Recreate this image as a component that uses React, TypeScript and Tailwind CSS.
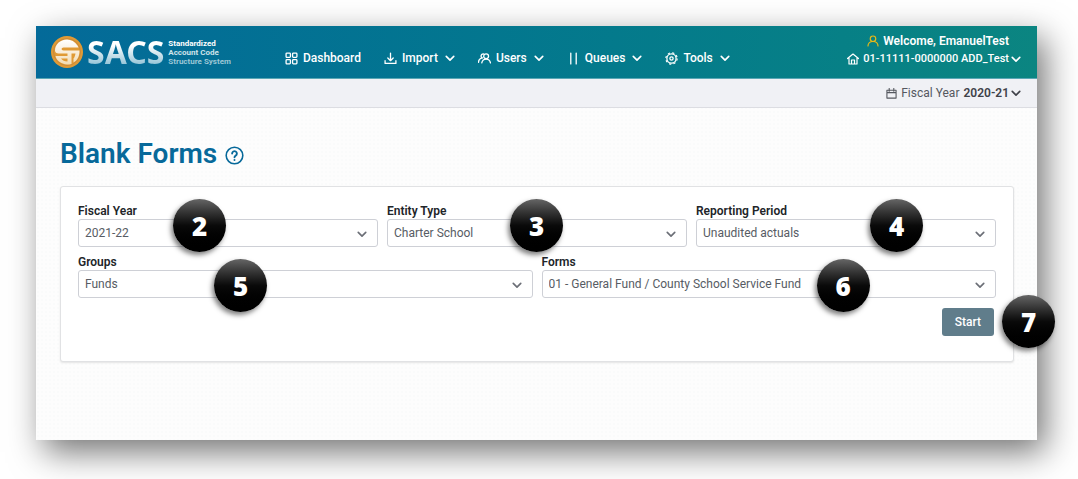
import { useId, type ReactNode } from "react";

type IconProps = { className?: string; children: ReactNode };

function Icon({ className = "size-[13px]", children }: IconProps) {
  return (
    <svg
      viewBox="0 0 24 24"
      fill="none"
      stroke="currentColor"
      strokeWidth="2.400"
      strokeLinecap="round"
      strokeLinejoin="round"
      aria-hidden="true"
      className={`shrink-0 ${className}`}
    >
      {children}
    </svg>
  );
}

function Chevron({ className = "size-2.5" }: { className?: string }) {
  return (
    <Icon className={className}>
      <path d="M3 8l9 9 9-9" strokeWidth="4" />
    </Icon>
  );
}

function Logo() {
  return (
    <a href="#home" className="flex items-center gap-1 text-white">
      <svg viewBox="0 0 64 64" className="size-8 shrink-0" aria-hidden="true">
        <defs>
          <linearGradient id="mark" gradientUnits="userSpaceOnUse" x1="0" y1="8" x2="0" y2="56">
            <stop offset="0" stopColor="#ffffff" />
            <stop offset="1" stopColor="#f3dcb4" />
          </linearGradient>
        </defs>
        <circle cx="32" cy="32" r="32" fill="#e09a35" />
        <circle cx="32" cy="32" r="27" fill="none" stroke="#c98a3a" strokeWidth="2" />
        <path
          d="M53 19C48 11 40 7 32 7 18 7 8 17 8 29c0 4 3 6 7 6h18v5H9c2 9 11 16 23 17 3 0 6 0 9-1V35h8c-1 5-2 8-4 10v8c8-5 12-12 12-24H25c-5 0-5-6 0-6h30ZM20 45h13v6c-6 0-10-2-13-6Z"
          fill="url(#mark)"
          fillRule="evenodd"
        />
      </svg>
      <span className="bg-linear-to-b from-white from-30% to-[#7fb9cf] bg-clip-text font-['Noto_Sans',sans-serif] text-[32px] leading-8 font-bold text-transparent">
        SACS
      </span>
      <span className="text-[8px] leading-[9px] font-bold">
        <span className="block">Standardized</span>
        <span className="block text-[#cfe3ea]">Account Code</span>
        <span className="block text-[#9cc7d6]">Structure System</span>
      </span>
    </a>
  );
}

function NavItem({ icon, label, menu = true }: { icon: ReactNode; label: string; menu?: boolean }) {
  return (
    <button type="button" className="flex items-center gap-[5px]">
      {icon}
      <span>{label}</span>
      {menu && <Chevron className="ml-0.5 size-2.5" />}
    </button>
  );
}

function Badge({ n, className }: { n: number; className: string }) {
  return (
    <span
      className={`pointer-events-none absolute z-10 flex h-[53px] w-[53px] items-center justify-center rounded-full bg-linear-to-b from-[#666] via-[#0a0a0a] via-50% to-black font-['Open_Sans',sans-serif] text-[26px] leading-none font-extrabold text-white shadow-[-2px_3px_5px_rgba(0,0,0,0.5)] ${className}`}
    >
      {n}
    </span>
  );
}

function Field({ label, value, badge, badgeClass }: { label: string; value: string; badge: number; badgeClass: string }) {
  const id = useId();
  return (
    <div className="relative min-w-0 flex-1">
      <label htmlFor={id} className="block text-xs leading-4 font-semibold text-[#212529]">
        {label}
      </label>
      <div className="relative">
        <select
          id={id}
          defaultValue={value}
          className="h-7 w-full appearance-none rounded-[3px] border border-[#ced0d6] bg-white pr-8 pl-1.5 text-xs text-[#575c64]"
        >
          <option>{value}</option>
        </select>
        <Chevron className="pointer-events-none absolute top-2.5 right-[11px] size-2.5 text-[#6c6f77]" />
      </div>
      <Badge n={badge} className={badgeClass} />
    </div>
  );
}

export default function App() {
  return (
    <div className="flex min-h-screen flex-col bg-white pt-[26px] pr-[41px] pb-[39px] pl-9 font-[Roboto,'Noto_Sans',sans-serif] text-xs">
      <div className="flex-1 bg-[#fdfdfd] bg-[radial-gradient(#fafbfb_1px,transparent_1px)] bg-size-[4px_4px] shadow-[8px_12px_32px_rgba(0,0,0,0.55)]">
        <header className="flex h-[53px] items-center border-b border-[#5aa7b5] bg-linear-to-r from-[#046a99] to-[#0b8581] pr-4 pl-[15px] text-white">
          <Logo />
          <nav className="ml-[54px] flex items-center gap-[23px] pt-3 font-medium">
            <NavItem
              label="Dashboard"
              menu={false}
              icon={
                <Icon>
                  <rect x="2" y="2" width="8" height="8" rx="1.5" />
                  <rect x="14" y="2" width="8" height="8" rx="1.5" />
                  <rect x="2" y="14" width="8" height="8" rx="1.5" />
                  <rect x="14" y="14" width="8" height="8" rx="1.5" />
                </Icon>
              }
            />
            <NavItem
              label="Import"
              icon={
                <Icon>
                  <path d="M12 2v13M7 11l5 5 5-5M2 16v5h20v-5" />
                </Icon>
              }
            />
            <NavItem
              label="Users"
              icon={
                <Icon>
                  <circle cx="15" cy="8" r="4.500" />
                  <path d="M7 20c1-5 4-7 8-7s7 2 8 7M11 4a3.500 3.500 0 1 0-3 7M1 19c0-4 3-7 7-8" />
                </Icon>
              }
            />
            <NavItem
              label="Queues"
              icon={
                <Icon>
                  <path d="M7 2v20M17 2v20" />
                </Icon>
              }
            />
            <NavItem
              label="Tools"
              icon={
                <Icon>
                  <circle cx="12" cy="12" r="8.500" />
                  <circle cx="12" cy="12" r="10.500" strokeWidth="2" strokeDasharray="4.100 4.150" strokeLinecap="butt" />
                  <circle cx="12" cy="12" r="3" />
                </Icon>
              }
            />
          </nav>
          <div className="ml-auto flex flex-col items-end pb-1 leading-[18px] font-medium">
            <span className="mr-3 flex items-center gap-1 font-semibold">
              <Icon className="size-3 text-[#e9b916]">
                <circle cx="12" cy="7.500" r="5.500" />
                <path d="M2 22c0-5 4-9 10-9s10 4 10 9" />
              </Icon>
              Welcome, EmanuelTest
            </span>
            <button type="button" className="flex items-center gap-0.5 text-[11px]">
              <Icon className="mr-0.5 size-3">
                <path d="M1 11L12 2l11 9M4 10v12h16V10M9 22v-8h6v8" />
              </Icon>
              01-11111-0000000 ADD_Test
              <Chevron />
            </button>
          </div>
        </header>
        <div className="flex h-[29px] items-center justify-end border-b border-[#dcdde2] bg-[#f0f1f5] pr-4 text-[#55585f]">
          <button type="button" className="flex items-center gap-1">
            <Icon className="size-[11px]">
              <path d="M2 5h20v17H2zM2 10h20M7 1v6M17 1v6" />
            </Icon>
            <span>Fiscal Year</span>
            <span className="flex items-center font-semibold text-[#3f4249]">
              2020-21
              <Chevron className="ml-0.5 size-2.5" />
            </span>
          </button>
        </div>
        <main className="pt-7 pr-[23px] pb-10 pl-6">
          <div className="flex items-center gap-2 text-[#07699a]">
            <h1 className="text-[28px] leading-9 font-semibold">Blank Forms</h1>
            <button type="button" aria-label="Help" className="pt-0.5">
              <Icon className="size-[19px]">
                <circle cx="12" cy="12" r="10.500" strokeWidth="2" />
                <path d="M9 9.500a3 3 0 1 1 4.500 2.600c-1 .6-1.500 1-1.500 2.200M12 17.500v.2" />
              </Icon>
            </button>
          </div>
          <form className="mt-3.5 flex flex-col gap-[7px] rounded-[3px] border border-[#e1e2e4] bg-white px-[17px] pt-4 pb-[25px] shadow-[0_1px_2px_rgba(0,0,0,0.1)]">
            <div className="flex gap-[9px]">
              <Field label="Fiscal Year" value="2021-22" badge={2} badgeClass="-top-1 left-[95px]" />
              <Field label="Entity Type" value="Charter School" badge={3} badgeClass="-top-1 left-[123px]" />
              <Field label="Reporting Period" value="Unaudited actuals" badge={4} badgeClass="-top-1 left-[174px]" />
            </div>
            <div className="flex gap-[9px]">
              <Field label="Groups" value="Funds" badge={5} badgeClass="top-[5px] left-[136px]" />
              <Field
                label="Forms"
                value="01 - General Fund / County School Service Fund"
                badge={6}
                badgeClass="top-[5px] left-[275px]"
              />
            </div>
            <div className="relative mt-[3px] flex justify-end pr-0.5">
              <button type="button" className="h-7 rounded-[3px] bg-[#607d8b] px-[13px] font-medium text-white">
                Start
              </button>
              <Badge n={7} className="-top-[13px] -right-[59px]" />
            </div>
          </form>
        </main>
      </div>
    </div>
  );
}
